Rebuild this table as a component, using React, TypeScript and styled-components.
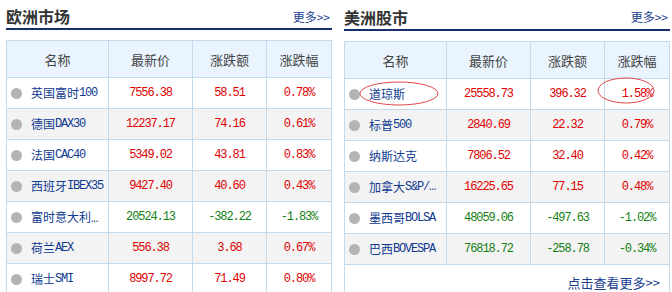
import styled, { createGlobalStyle } from "styled-components";

type Row = { name: string; price: string; change: string; pct: string };

const europe: Row[] = [
    { name: "英国富时100", price: "7556.38", change: "58.51", pct: "0.78%" },
    { name: "德国DAX30", price: "12237.17", change: "74.16", pct: "0.61%" },
    { name: "法国CAC40", price: "5349.02", change: "43.81", pct: "0.83%" },
    { name: "西班牙IBEX35", price: "9427.40", change: "40.60", pct: "0.43%" },
    { name: "富时意大利…", price: "20524.13", change: "-382.22", pct: "-1.83%" },
    { name: "荷兰AEX", price: "556.38", change: "3.68", pct: "0.67%" },
    { name: "瑞士SMI", price: "8997.72", change: "71.49", pct: "0.80%" },
]

const america: Row[] = [
    { name: "道琼斯", price: "25558.73", change: "396.32", pct: "1.58%" },
    { name: "标普500", price: "2840.69", change: "22.32", pct: "0.79%" },
    { name: "纳斯达克", price: "7806.52", change: "32.40", pct: "0.42%" },
    { name: "加拿大S&P/…", price: "16225.65", change: "77.15", pct: "0.48%" },
    { name: "墨西哥BOLSA", price: "48059.06", change: "-497.63", pct: "-1.02%" },
    { name: "巴西BOVESPA", price: "76818.72", change: "-258.78", pct: "-0.34%" },
]

const GlobalStyle = createGlobalStyle`
    html, body { margin: 0; padding: 0; background: #fff; overflow: hidden; }
    body { font-family: "Liberation Mono", "Noto Sans CJK SC", monospace; }
`;

const Page = styled.div`
    display: flex;
    gap: 12px;
    padding-left: 6px;
    width: 672px;
    height: 292px;
    overflow: hidden;
`;

const Panel = styled.div`
    position: relative;
    width: 326px;
    display: flex;
    flex-direction: column;
`;

const TitleBar = styled.div`
    height: 31px;
    display: flex;
    align-items: center;
    justify-content: space-between;
    border-bottom: 2px solid #152f6b;
    margin-bottom: 10px;
`;

const Title = styled.div`
    font-family: "Noto Sans CJK SC", sans-serif;
    font-weight: bold;
    font-size: 16px;
    color: #333;
    padding-top: 4px;
`;

const More = styled.a`
    font-family: "Noto Sans CJK SC", sans-serif;
    font-size: 12px;
    color: #1a3d8f;
    text-decoration: none;
    padding-top: 4px;
    margin-right: 2px;
`;

const Table = styled.div`
    border-left: 1px solid #c3d9ec;
    border-right: 1px solid #c3d9ec;
    border-top: 1px solid #c3d9ec;
`;

const Line = styled.div<{ $head?: boolean; $alt?: boolean }>`
    display: grid;
    grid-template-columns: 101px 84px 74px 1fr;
    height: ${p => (p.$head ? 36 : 30)}px;
    border-bottom: 1px solid #c3d9ec;
    background: ${p => (p.$head ? "#eaf4fe" : p.$alt ? "#f3f3f3" : "#fff")};
`;

const Cell = styled.div<{ $color?: string }>`
    display: flex;
    align-items: center;
    justify-content: center;
    border-left: 1px solid #c3d9ec;
    font-size: 12px;
    letter-spacing: -1.1px;
    color: ${p => p.$color || "#333"};
    &:first-child { border-left: none; }
`;

const HeadCell = styled(Cell)`
    font-family: "Noto Sans CJK SC", sans-serif;
    font-size: 13px;
    letter-spacing: 0;
    color: #444;
`;

const NameCell = styled.div`
    display: flex;
    align-items: center;
    padding-left: 4px;
    overflow: hidden;
    white-space: nowrap;
    font-size: 12px;
    color: #0f3a8f;
`;

const Latin = styled.span`
    letter-spacing: -1.2px;
`;

const Dot = styled.span`
    flex: none;
    width: 11px;
    height: 11px;
    margin-right: 9px;
    border-radius: 50%;
    background: #b4b4b4;
`;

const Footer = styled.div`
    flex: 1;
    display: flex;
    justify-content: flex-end;
    align-items: flex-start;
    padding: 8px 9px 0 0;
    border-left: 1px solid #c3d9ec;
    border-right: 1px solid #c3d9ec;
`;

const FooterLink = styled.a`
    font-family: "Noto Sans CJK SC", sans-serif;
    font-size: 13px;
    color: #1a3d8f;
    text-decoration: none;
`;

const Ring = styled.svg<{ $x: number; $y: number }>`
    position: absolute;
    left: ${p => p.$x}px;
    top: ${p => p.$y}px;
    overflow: visible;
`;

const tone = (v: string) => (v.startsWith("-") ? "#138013" : "#e00000");

// split a name into CJK and latin pieces so the latin part can be tightened
function Name({ text }: { text: string }) {
    const parts = text.match(/[A-Za-z0-9&\/]+|[^A-Za-z0-9&\/]+/g) || []
    return (
        <>
            {parts.map((p, i) => (/[A-Za-z0-9]/.test(p) ? <Latin key={i}>{p}</Latin> : <span key={i}>{p}</span>))}
        </>
    )
}

function MarketTable({ rows }: { rows: Row[] }) {
    return (
        <Table>
            <Line $head>
                <HeadCell>名称</HeadCell>
                <HeadCell>最新价</HeadCell>
                <HeadCell>涨跌额</HeadCell>
                <HeadCell>涨跌幅</HeadCell>
            </Line>
            {rows.map((r, i) => (
                <Line key={r.name} $alt={i % 2 === 1}>
                    <NameCell>
                        <Dot />
                        <Name text={r.name} />
                    </NameCell>
                    <Cell $color={tone(r.change)}>{r.price}</Cell>
                    <Cell $color={tone(r.change)}>{r.change}</Cell>
                    <Cell $color={tone(r.change)}>{r.pct}</Cell>
                </Line>
            ))}
        </Table>
    )
}

export default function App() {
    return (
        <Page>
            <GlobalStyle />
            <Panel>
                <TitleBar>
                    <Title>欧洲市场</Title>
                    <More href="#">更多&gt;&gt;</More>
                </TitleBar>
                <MarketTable rows={europe} />
            </Panel>
            <Panel>
                <TitleBar>
                    <Title>美洲股市</Title>
                    <More href="#">更多&gt;&gt;</More>
                </TitleBar>
                <MarketTable rows={america} />
                <Footer>
                    <FooterLink href="#">点击查看更多&gt;&gt;</FooterLink>
                </Footer>
                <Ring $x={15} $y={81} width="80" height="25">
                    <ellipse cx="40" cy="12.5" rx="39" ry="11.5" fill="none" stroke="#e04848" strokeWidth="1" />
                </Ring>
                <Ring $x={253} $y={77} width="58" height="27">
                    <ellipse cx="29" cy="13.5" rx="28" ry="12.5" fill="none" stroke="#e04848" strokeWidth="1" />
                </Ring>
            </Panel>
        </Page>
    )
}
